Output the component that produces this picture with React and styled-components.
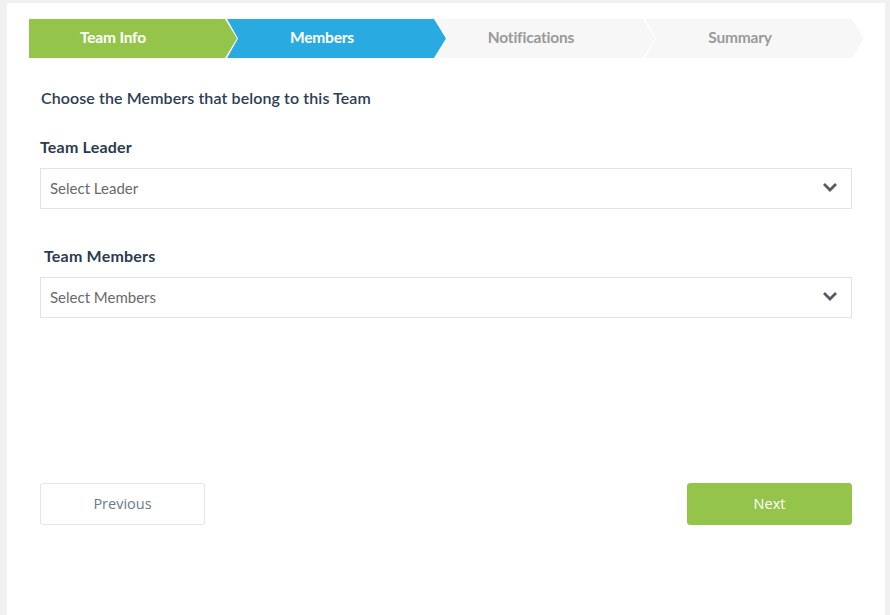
import React from "react";
import styled, { createGlobalStyle } from "styled-components";

const GlobalStyle = createGlobalStyle`
  html, body {
    margin: 0;
    padding: 0;
    background: #f1f1f1;
    font-family: Lato, "Open Sans", sans-serif;
  }
  * { box-sizing: border-box; }
`;

const Card = styled.div`
  margin: 3px 5px 0 7px;
  min-height: 612px;
  background: #ffffff;
  padding: 16px 22px 0 22px;
`;

const Wizard = styled.ul`
  display: flex;
  list-style: none;
  margin: 0;
  padding: 0;
  height: 39px;
`;

const Step = styled.li`
  flex: 0 0 ${(p) => (p.$first ? 208 : 219)}px;
  margin-left: ${(p) => (p.$first ? 0 : -10)}px;
  height: 100%;
  display: flex;
  align-items: center;
  justify-content: center;
  padding: 0 40px 3px ${(p) => (p.$first ? 0 : 11)}px;
  background: ${(p) => p.$bg};
  color: ${(p) => p.$color};
  font-size: 15.5px;
  font-weight: 700;
  letter-spacing: -0.2px;
  clip-path: ${(p) =>
    p.$first
      ? "polygon(0 0, calc(100% - 12px) 0, 100% 50%, calc(100% - 12px) 100%, 0 100%)"
      : "polygon(0 0, calc(100% - 12px) 0, 100% 50%, calc(100% - 12px) 100%, 0 100%, 11px 50%)"};
`;

const Form = styled.div`
  padding: 0 11px;
`;

const Heading = styled.h3`
  margin: 30px 0 0 1px;
  font-size: 16px;
  line-height: 20px;
  font-weight: 600;
  letter-spacing: 0.1px;
  color: #2d3d55;
`;

const Label = styled.label`
  display: block;
  margin: ${(p) => p.$top}px 0 11px ${(p) => p.$indent || 0}px;
  font-size: 16px;
  line-height: 20px;
  font-weight: 700;
  letter-spacing: 0.2px;
  color: #2b3b4e;
`;

const Select = styled.div`
  height: 41px;
  border: 1px solid #e3e3e3;
  display: flex;
  align-items: center;
  justify-content: space-between;
  padding: 0 14px 2px 9px;
  font-size: 15px;
  color: #6a6a6a;
`;

const Chevron = () => (
  <svg width="14" height="10" viewBox="0 0 14 10">
    <polyline
      points="2,2 7,7 12,2"
      fill="none"
      stroke="#555b63"
      strokeWidth="2.8"
      strokeLinecap="square"
    />
  </svg>
);

const Actions = styled.div`
  display: flex;
  justify-content: space-between;
  margin-top: 165px;
`;

const Button = styled.button`
  width: 165px;
  height: 42px;
  padding-bottom: 2px;
  border-radius: 3px;
  font-family: "Open Sans", sans-serif;
  font-size: 14.5px;
  cursor: pointer;
  border: 1px solid ${(p) => (p.$primary ? "#94c54a" : "#e2e5ea")};
  background: ${(p) => (p.$primary ? "#94c54a" : "#ffffff")};
  color: ${(p) => (p.$primary ? "#ffffff" : "#6b7b8c")};
`;

const steps = [
  { label: "Team Info", bg: "#94c54a", color: "#ffffff" },
  { label: "Members", bg: "#29abe1", color: "#ffffff" },
  { label: "Notifications", bg: "#f7f7f7", color: "#9a9a9a" },
  { label: "Summary", bg: "#f7f7f7", color: "#9a9a9a" },
];

export default function App() {
  return (
    <>
      <GlobalStyle />
      <Card>
        <Wizard>
          {steps.map((s, i) => (
            <Step key={s.label} $first={i === 0} $bg={s.bg} $color={s.color}>
              {s.label}
            </Step>
          ))}
        </Wizard>
        <Form>
          <Heading>Choose the Members that belong to this Team</Heading>
          <Label $top={29}>Team Leader</Label>
          <Select>
            Select Leader
            <Chevron />
          </Select>
          <Label $top={37} $indent={4}>Team Members</Label>
          <Select>
            Select Members
            <Chevron />
          </Select>
          <Actions>
            <Button>Previous</Button>
            <Button $primary>Next</Button>
          </Actions>
        </Form>
      </Card>
    </>
  );
}
